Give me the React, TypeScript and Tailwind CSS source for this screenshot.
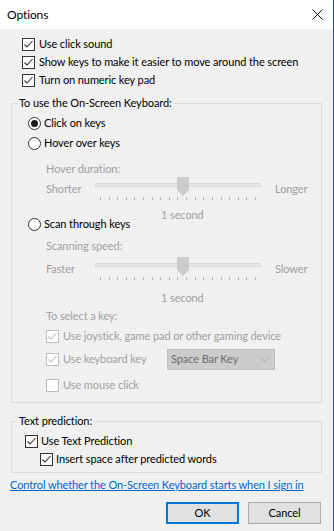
import React from 'react';

function Check({ checked = true, disabled = false }: { checked?: boolean; disabled?: boolean }) {
    return (
        <span
            className={`flex h-[13px] w-[13px] shrink-0 items-center justify-center border bg-white ${
                disabled ? 'border-[#bcbcbc]' : 'border-[#333333]'
            }`}
        >
            {checked && (
                <svg width="11" height="11" viewBox="0 0 11 11">
                    <polyline
                        points="1.5,5.5 4,8 9.5,2"
                        fill="none"
                        stroke={disabled ? '#bcbcbc' : '#333333'}
                        strokeWidth="1.1"
                    />
                </svg>
            )}
        </span>
    );
}

function Radio({ selected = false }: { selected?: boolean }) {
    return (
        <span className="flex h-[13px] w-[13px] shrink-0 items-center justify-center rounded-full border border-[#333333] bg-white">
            {selected && <span className="h-[7px] w-[7px] rounded-full bg-[#1a1a1a]" />}
        </span>
    );
}

function Slider({ left, right }: { left: string; right: string }) {
    return (
        <div className="flex h-[24px] items-start pl-[34px] text-[#a0a0a0]">
            <span className="mt-[3px] w-[49px] leading-[16px]">{left}</span>
            <div className="relative h-[24px] w-[166px]">
                <div className="mt-[5px] h-[4px] w-full border border-[#dadada] bg-[#e7e7e7]" />
                {/* thumb */}
                <svg className="absolute left-[82px] top-[-1px]" width="12" height="19" viewBox="0 0 12 19">
                    <polygon points="0,0 12,0 12,13 6,19 0,13" fill="#cccccc" />
                </svg>
                <div className="mt-[10px] flex justify-between px-[5px]">
                    {Array.from({ length: 19 }).map((_, i) => (
                        <span key={i} className="h-[3px] w-px bg-[#b4b4b4]" />
                    ))}
                </div>
            </div>
            <span className="ml-[14px] mt-[3px] leading-[16px]">{right}</span>
        </div>
    );
}

export default function App() {
    return (
        <div className="h-[531px] w-[334px] overflow-hidden whitespace-nowrap border-r border-[#1b5b86] bg-[#f0f0f0] font-['Segoe_UI',Lato,sans-serif] text-[11px] leading-[16px] tracking-[-0.1px] text-black">
            {/* Title bar */}
            <div className="flex h-[29px] items-center justify-between bg-white pl-[7px] pr-[10px]">
                <span className="text-[12px]">Options</span>
                <svg width="11" height="11" viewBox="0 0 11 11">
                    <path d="M0.5 0.5 L10.5 10.5 M10.5 0.5 L0.5 10.5" stroke="#111" strokeWidth="1" />
                </svg>
            </div>

            {/* General options */}
            <div className="pl-[22px] pt-[6px]">
                <div className="flex h-[18px] items-center gap-[4px]">
                    <Check />
                    <span>Use click sound</span>
                </div>
                <div className="flex h-[18px] items-center gap-[4px]">
                    <Check />
                    <span>Show keys to make it easier to move around the screen</span>
                </div>
                <div className="flex h-[18px] items-center gap-[4px]">
                    <Check />
                    <span>Turn on numeric key pad</span>
                </div>
            </div>

            {/* On-Screen Keyboard group */}
            <fieldset className="ml-[11px] mt-[6px] w-[311px] border border-[#dcdcdc] pb-[8px]">
                <legend className="ml-[5px] px-[2px] leading-[16px]">To use the On-Screen Keyboard:</legend>
                <div className="mt-[3px] flex h-[18px] items-center gap-[3px] pl-[16px]">
                    <Radio selected />
                    <span>Click on keys</span>
                </div>
                <div className="mt-[2px] flex h-[18px] items-center gap-[3px] pl-[16px]">
                    <Radio />
                    <span>Hover over keys</span>
                </div>
                <div className="mt-[8px] flex h-[18px] items-center pl-[34px] text-[#a0a0a0]">Hover duration:</div>
                <Slider left="Shorter" right="Longer" />
                <div className="mt-[7px] h-[12px] pl-[149px] leading-[12px] text-[#a0a0a0]">1 second</div>
                <div className="mt-[-6px] flex h-[18px] items-center gap-[3px] pl-[16px]">
                    <Radio />
                    <span>Scan through keys</span>
                </div>
                <div className="mt-[4px] flex h-[18px] items-center pl-[34px] text-[#a0a0a0]">Scanning speed:</div>
                <div className="mt-[3px]">
                    <Slider left="Faster" right="Slower" />
                </div>
                <div className="mt-[10px] h-[12px] pl-[149px] leading-[12px] text-[#a0a0a0]">1 second</div>
                <div className="mt-[3px] flex h-[18px] items-center pl-[34px] text-[#a0a0a0]">To select a key:</div>
                <div className="mt-[2px] flex h-[18px] items-center gap-[4px] pl-[34px] text-[#a0a0a0]">
                    <Check disabled />
                    <span>Use joystick, game pad or other gaming device</span>
                </div>
                <div className="mt-[3px] flex h-[22px] items-center gap-[4px] pl-[34px] text-[#a0a0a0]">
                    <Check disabled />
                    <span className="w-[100px]">Use keyboard key</span>
                    <div className="flex h-[21px] w-[108px] items-center justify-between border border-[#bfbfbf] bg-[#cccccc] pl-[3px] pr-[5px] text-[#6d6d6d]">
                        <span>Space Bar Key</span>
                        <svg width="9" height="5" viewBox="0 0 9 5">
                            <polyline points="0.5,0.5 4.5,4.5 8.5,0.5" fill="none" stroke="#a8a8a8" strokeWidth="1" />
                        </svg>
                    </div>
                </div>
                <div className="mt-[6px] flex h-[18px] items-center gap-[4px] pl-[34px] text-[#a0a0a0]">
                    <Check checked={false} disabled />
                    <span>Use mouse click</span>
                </div>
            </fieldset>

            {/* Text prediction group */}
            <fieldset className="ml-[11px] mt-[10px] w-[311px] border border-[#dcdcdc] pb-[4px]">
                <legend className="ml-[5px] px-[2px] leading-[16px]">Text prediction:</legend>
                <div className="mt-[3px] flex h-[18px] items-center gap-[3px] pl-[13px]">
                    <Check />
                    <span>Use Text Prediction</span>
                </div>
                <div className="flex h-[18px] items-center gap-[3px] pl-[28px]">
                    <Check />
                    <span>Insert space after predicted words</span>
                </div>
            </fieldset>

            <div className="ml-[10px] mt-[4px] h-[16px]">
                <a href="#" className="text-[#0066cc] underline">
                    Control whether the On-Screen Keyboard starts when I sign in
                </a>
            </div>

            <div className="mt-[9px] flex justify-end gap-[9px] pr-[12px]">
                <button className="h-[22px] w-[73px] border-2 border-[#0078d7] bg-[#e1e1e1]">OK</button>
                <button className="h-[22px] w-[73px] border border-[#adadad] bg-[#e1e1e1]">Cancel</button>
            </div>
        </div>
    );
}
